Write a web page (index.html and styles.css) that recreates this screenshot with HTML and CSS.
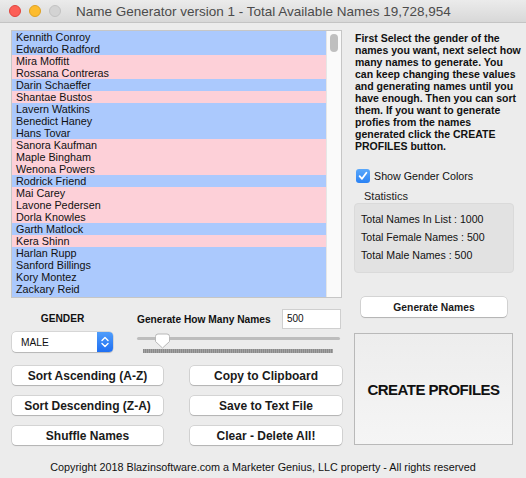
FILE: index.html
```html
<!DOCTYPE html>
<html>
<head>
<meta charset="utf-8">
<link rel="stylesheet" href="styles.css">
</head>
<body>
<div class="window">
  <div class="titlebar">
    <span class="light red"></span><span class="light yellow"></span><span class="light gray"></span>
    <span class="title">Name Generator version 1 - Total Available Names 19,728,954</span>
  </div>
  <div class="main">
    <div class="left">
      <div class="list">
        <div class="rows">
          <div class="row m">Kennith Conroy</div>
          <div class="row m">Edwardo Radford</div>
          <div class="row f">Mira Moffitt</div>
          <div class="row f">Rossana Contreras</div>
          <div class="row m">Darin Schaeffer</div>
          <div class="row f">Shantae Bustos</div>
          <div class="row m">Lavern Watkins</div>
          <div class="row m">Benedict Haney</div>
          <div class="row m">Hans Tovar</div>
          <div class="row f">Sanora Kaufman</div>
          <div class="row f">Maple Bingham</div>
          <div class="row f">Wenona Powers</div>
          <div class="row m">Rodrick Friend</div>
          <div class="row f">Mai Carey</div>
          <div class="row f">Lavone Pedersen</div>
          <div class="row f">Dorla Knowles</div>
          <div class="row m">Garth Matlock</div>
          <div class="row f">Kera Shinn</div>
          <div class="row m">Harlan Rupp</div>
          <div class="row m">Sanford Billings</div>
          <div class="row m">Kory Montez</div>
          <div class="row m">Zackary Reid</div>
          <div class="row m">Ashton Grant</div>
        </div>
        <div class="scrollbar"><div class="thumb"></div></div>
      </div>
      <div class="controls">
        <div class="gender">
          <div class="label">GENDER</div>
          <div class="select">
            <span class="select-text">MALE</span>
            <span class="stepper">
              <svg width="16" height="20" viewBox="0 0 16 20"><path d="M5 8.5 L8 5.5 L11 8.5 M5 11.5 L8 14.5 L11 11.5" fill="none" stroke="#fff" stroke-width="1.4" stroke-linecap="round" stroke-linejoin="round"/></svg>
            </span>
          </div>
        </div>
        <div class="count">
          <div class="count-top">
            <span class="label">Generate How Many Names</span>
            <div class="input">500</div>
          </div>
          <div class="slider">
            <div class="track"></div>
            <svg class="knob" width="17" height="16" viewBox="0 0 17 16"><path d="M1.5 3.5 A2.5 2.5 0 0 1 4 1 H13 A2.5 2.5 0 0 1 15.5 3.5 V8.5 L8.5 15 L1.5 8.5 Z" fill="#fff" stroke="#b8b8b8" stroke-width="1"/></svg>
            <div class="ticks"></div>
          </div>
        </div>
      </div>
      <div class="buttons">
        <button class="btn">Sort Ascending (A-Z)</button>
        <button class="btn">Copy to Clipboard</button>
        <button class="btn">Sort Descending (Z-A)</button>
        <button class="btn">Save to Text File</button>
        <button class="btn">Shuffle Names</button>
        <button class="btn">Clear - Delete All!</button>
      </div>
    </div>
    <div class="right">
      <p class="help">First Select the gender of the<br>names you want, next select how<br>many names to generate. You<br>can keep changing these values<br>and generating names until you<br>have enough. Then you can sort<br>them. If you want to generate<br>profies from the names<br>generated click the CREATE<br>PROFILES button.</p>
      <div class="check">
        <span class="box"><svg width="14" height="14" viewBox="0 0 14 14"><path d="M3.6 7.2 L6 9.8 L10.4 3.8" fill="none" stroke="#fff" stroke-width="1.8" stroke-linecap="round" stroke-linejoin="round"/></svg></span>
        <span>Show Gender Colors</span>
      </div>
      <div class="stats-label">Statistics</div>
      <div class="stats">
        <div class="stat">Total Names In List : 1000</div>
        <div class="stat">Total Female Names : 500</div>
        <div class="stat">Total Male Names : 500</div>
      </div>
      <button class="btn gen">Generate Names</button>
      <button class="create">CREATE PROFILES</button>
    </div>
  </div>
  <div class="footer">Copyright 2018 Blazinsoftware.com a Marketer Genius, LLC property - All rights reserved</div>
</div>
</body>
</html>
```
FILE: styles.css
```css
* { box-sizing: border-box; }
html, body { margin: 0; padding: 0; }
body {
  width: 526px;
  height: 478px;
  overflow: hidden;
  background: #ececec;
  font-family: "Liberation Sans", Arial, sans-serif;
  color: #111;
}
.window { width: 526px; height: 478px; background: #ececec; }

.titlebar {
  height: 23px;
  display: flex;
  align-items: center;
  padding-left: 9px;
  background: linear-gradient(#ebebeb, #d8d8d8);
  border-bottom: 1px solid #c4c4c4;
}
.light {
  width: 12px; height: 12px; border-radius: 50%;
  margin-right: 8px;
  flex: none;
}
.light.red { background: #fc5f57; border: 1px solid #e0443e; }
.light.yellow { background: #fdbc2e; border: 1px solid #dea123; }
.light.gray { background: #d3d3d3; border: 1px solid #c2c2c2; }
.title {
  margin-left: 7px;
  font-size: 13.5px;
  color: #4b4b4b;
  white-space: nowrap;
}

.main {
  display: flex;
  gap: 12px;
  padding: 7px 0 0 11px;
}
.left { width: 331px; }
.right { width: 160px; display: flex; flex-direction: column; align-items: flex-start; }

.list {
  height: 268px;
  border: 1px solid #c6c6c6;
  display: flex;
  background: #fff;
  overflow: hidden;
}
.rows { flex: 1; overflow: hidden; }
.row {
  height: 12px;
  line-height: 12px;
  font-size: 10.8px;
  padding-left: 4px;
  color: #111;
  white-space: nowrap;
}
.row.m { background: #abc9fd; }
.row.f { background: #fdd0d8; }
.scrollbar {
  width: 15px;
  background: #fafafa;
  border-left: 1px solid #e6e6e6;
  padding: 3px 0 0 3px;
}
.thumb {
  width: 8px; height: 18px;
  border-radius: 4px;
  background: #bfbfbf;
}

.controls {
  margin-top: 11px;
  padding-left: 1px;
  display: flex;
  gap: 24px;
}
.label { font-size: 10.2px; font-weight: bold; color: #111; white-space: nowrap; }
.gender { width: 101px; display: flex; flex-direction: column; align-items: center; gap: 3px; }
.gender .label { height: 20px; line-height: 20px; }
.select {
  width: 101px; height: 20px;
  background: #fff;
  border-radius: 4px;
  box-shadow: 0 0 0 0.5px rgba(0,0,0,0.18), 0 1px 1px rgba(0,0,0,0.15);
  display: flex;
  align-items: center;
  justify-content: space-between;
}
.select-text { font-size: 10.2px; padding-left: 9px; color: #111; }
.stepper {
  width: 16px; height: 20px;
  border-radius: 0 4px 4px 0;
  background: linear-gradient(#4f9dfb, #1f6ff2);
  display: flex;
}
.count { width: 204px; display: flex; flex-direction: column; gap: 3px; }
.count-top { height: 20px; display: flex; align-items: center; justify-content: space-between; }
.input {
  width: 59px; height: 20px;
  background: #fff;
  border: 1px solid #cfcfcf;
  font-size: 10px;
  line-height: 18px;
  padding-left: 4px;
  color: #111;
}
.slider { position: relative; height: 20px; }
.track {
  position: absolute; left: 0; top: 5px;
  width: 203px; height: 3px;
  border-radius: 2px;
  background: #bdbdbd;
}
.knob { position: absolute; left: 17px; top: 1px; }
.ticks {
  position: absolute; left: 6px; top: 17px;
  width: 190px; height: 4px;
  background: repeating-linear-gradient(90deg, #8a8a8a 0 1px, #a4a4a4 1px 2px);
}

.buttons {
  margin-top: 14px;
  padding-left: 1px;
  display: grid;
  grid-template-columns: 151px 152px;
  column-gap: 27px;
  row-gap: 11px;
}
.btn {
  height: 19px;
  margin: 0;
  padding: 0;
  border: none;
  border-radius: 4px;
  background: #fff;
  box-shadow: 0 0 0 0.5px rgba(0,0,0,0.2), 0 1px 1px rgba(0,0,0,0.16);
  font-family: "Liberation Sans", Arial, sans-serif;
  font-size: 12px;
  font-weight: bold;
  color: #1a1a1a;
  white-space: nowrap;
}

.help {
  margin: 2px 0 0 0;
  padding-left: 1px;
  font-size: 10.5px;
  line-height: 12px;
  font-weight: bold;
  white-space: nowrap;
  color: #111;
}
.check {
  margin-top: 17px;
  margin-left: 2px;
  height: 14px;
  display: flex;
  align-items: center;
  gap: 4px;
  font-size: 10.7px;
  color: #111;
}
.box {
  width: 14px; height: 14px;
  border-radius: 3px;
  background: linear-gradient(#5aa8fb, #2a82f4);
  display: flex;
}
.stats-label {
  margin-top: 7px;
  padding-left: 10px;
  font-size: 11px;
  line-height: 13px;
  color: #222;
}
.stats {
  width: 160px; height: 70px;
  border-radius: 4px;
  background: #e2e2e2;
  border: 1px solid #dadada;
  padding: 6px 0 0 6px;
}
.stat { font-size: 10.6px; line-height: 18px; color: #111; white-space: nowrap; }
.btn.gen {
  margin-top: 24px;
  margin-left: 7px;
  width: 146px;
  height: 20px;
  font-size: 10.3px;
}
.create {
  margin: 16px 0 0 0;
  width: 159px; height: 112px;
  padding: 0;
  border: 1px solid #b9b9b9;
  background: linear-gradient(#ededed, #f5f5f5);
  font-family: "Liberation Sans", Arial, sans-serif;
  font-size: 15px;
  letter-spacing: -0.5px;
  font-weight: bold;
  color: #111;
}

.footer {
  padding-top: 16px;
  text-align: center;
  font-size: 10.8px;
  line-height: 12px;
  color: #111;
  white-space: nowrap;
}
```
